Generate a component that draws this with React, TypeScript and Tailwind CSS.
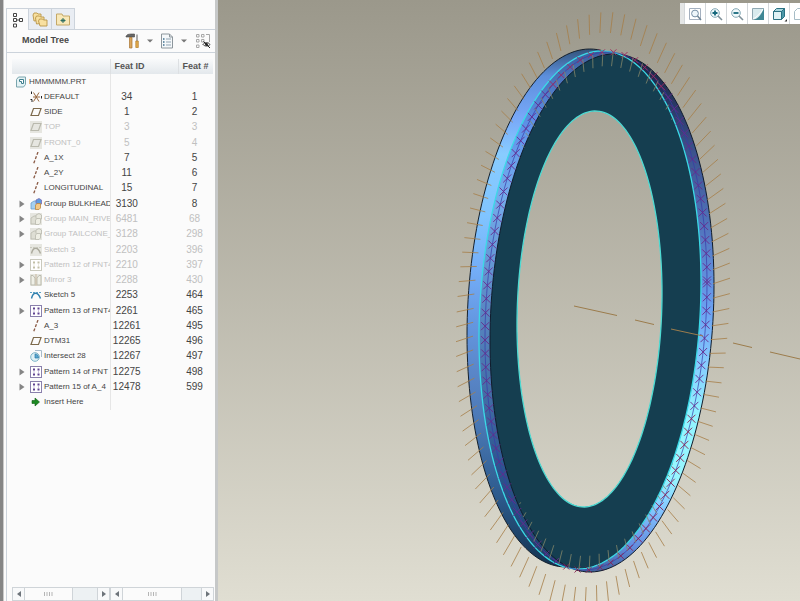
import React, { useState } from 'react';

type Kind = 'part' | 'csys' | 'plane' | 'axis' | 'group' | 'sketch' | 'pattern' | 'mirror' | 'intersect' | 'insert';

interface Feature {
  name: string;
  kind: Kind;
  id?: number;
  num?: number;
  off?: boolean;
  expandable?: boolean;
}

const features: Feature[] = [
  { name: 'HMMMMM.PRT', kind: 'part' },
  { name: 'DEFAULT', kind: 'csys', id: 34, num: 1 },
  { name: 'SIDE', kind: 'plane', id: 1, num: 2 },
  { name: 'TOP', kind: 'plane', id: 3, num: 3, off: true },
  { name: 'FRONT_0', kind: 'plane', id: 5, num: 4, off: true },
  { name: 'A_1X', kind: 'axis', id: 7, num: 5 },
  { name: 'A_2Y', kind: 'axis', id: 11, num: 6 },
  { name: 'LONGITUDINAL', kind: 'axis', id: 15, num: 7 },
  { name: 'Group BULKHEAD', kind: 'group', id: 3130, num: 8, expandable: true },
  { name: 'Group MAIN_RIVE', kind: 'group', id: 6481, num: 68, off: true, expandable: true },
  { name: 'Group TAILCONE_', kind: 'group', id: 3128, num: 298, off: true, expandable: true },
  { name: 'Sketch 3', kind: 'sketch', id: 2203, num: 396, off: true },
  { name: 'Pattern 12 of PNT4', kind: 'pattern', id: 2210, num: 397, off: true, expandable: true },
  { name: 'Mirror 3', kind: 'mirror', id: 2288, num: 430, off: true, expandable: true },
  { name: 'Sketch 5', kind: 'sketch', id: 2253, num: 464 },
  { name: 'Pattern 13 of PNT4', kind: 'pattern', id: 2261, num: 465, expandable: true },
  { name: 'A_3', kind: 'axis', id: 12261, num: 495 },
  { name: 'DTM31', kind: 'plane', id: 12265, num: 496 },
  { name: 'Intersect 28', kind: 'intersect', id: 12267, num: 497 },
  { name: 'Pattern 14 of PNT', kind: 'pattern', id: 12275, num: 498, expandable: true },
  { name: 'Pattern 15 of A_4', kind: 'pattern', id: 12478, num: 599, expandable: true },
  { name: 'Insert Here', kind: 'insert' },
];

// ---- Ring geometry ----
interface Oval { cx: number; cy: number; w: number; h: number; tilt: number }

const back: Oval = { cx: 578, cy: 308, w: 111, h: 259, tilt: 0.107 };
const rim: Oval = { cx: 590, cy: 310, w: 111, h: 259, tilt: 0.107 };
const front: Oval = { cx: 602, cy: 313, w: 112, h: 259, tilt: 0.107 };
const rivets: Oval = { cx: 596, cy: 311, w: 111, h: 259, tilt: 0.107 };
const hole: Oval = { cx: 589.5, cy: 309, w: 72.5, h: 198, tilt: 0.08 };
const tickEnds: Oval = { cx: 593, cy: 310, w: 137, h: 298, tilt: 0.107 };
const innerEnds: Oval = { cx: 596, cy: 311, w: 107, h: 245, tilt: 0.107 };

const at = (o: Oval, t: number) => ({
  x: o.cx + o.w * Math.cos(t),
  y: o.cy + o.h * Math.sin(t - o.tilt),
});

const ovalPath = (o: Oval) => {
  const pts: string[] = [];
  for (let i = 0; i < 180; i++) {
    const p = at(o, (i * Math.PI) / 90);
    pts.push(`${p.x.toFixed(2)} ${p.y.toFixed(2)}`);
  }
  return `M${pts.join('L')}Z`;
};

// Angles that are evenly spread along the curve, with x counted heavier than y
const spread = (o: Oval, step: number, weight: number) => {
  const out: number[] = [];
  let acc = step;
  let prev = at(o, 0);
  for (let t = 0; t < Math.PI * 2; t += 0.002) {
    const p = at(o, t);
    acc += Math.hypot((p.x - prev.x) * weight, p.y - prev.y);
    prev = p;
    if (acc >= step) {
      out.push(t);
      acc -= step;
    }
  }
  return out;
};

const crossAngles = spread(rivets, 13.7, 1.2);
const tickAngles = spread(tickEnds, 15, 1.25);

const P = {
  back: ovalPath(back),
  rim: ovalPath(rim),
  front: ovalPath(front),
  rivets: ovalPath(rivets),
  hole: ovalPath(hole),
};

const Stops = ({ list }: { list: [number, string][] }) => (
  <>
    {list.map(([o, c]) => <stop key={o} offset={o} stopColor={c} />)}
  </>
);

const RingModel = () => (
  <svg className="block h-full w-full" viewBox="218 0 582 601" preserveAspectRatio="xMinYMin slice" role="img" aria-label="Ring part">
    <defs>
      <linearGradient id="outer" gradientUnits="userSpaceOnUse" x1="0" x2="0" y1="50" y2="570">
        <Stops list={[[0, '#34567f'], [0.05, '#5c8fdc'], [0.13, '#78a8f8'], [0.2, '#88ccff'], [0.32, '#80c4ff'], [0.42, '#74aef8'], [0.52, '#6498e2'], [0.62, '#5a86c8'], [0.72, '#4a78b4'], [0.86, '#2c5a8c'], [1, '#12304c']]} />
      </linearGradient>
      <linearGradient id="inner" gradientUnits="userSpaceOnUse" x1="0" x2="0" y1="50" y2="570">
        <Stops list={[[0, '#3c5f9d'], [0.15, '#5f94ea'], [0.28, '#74acec'], [0.45, '#6090cc'], [0.65, '#4470a8'], [0.8, '#2d5690'], [1, '#1b3f63']]} />
      </linearGradient>
      <linearGradient id="right" gradientUnits="userSpaceOnUse" x1="0" x2="0" y1="50" y2="572">
        <Stops list={[[0, '#1a2840'], [0.06, '#202c52'], [0.2, '#3c548f'], [0.35, '#5377c0'], [0.5, '#6ba2f2'], [0.6, '#86ccff'], [0.7, '#92f4ff'], [0.82, '#98f6ff'], [0.88, '#84c6ff'], [0.95, '#648ee0'], [1, '#40609c']]} />
      </linearGradient>
      <clipPath id="face"><path d={P.front} /></clipPath>
    </defs>

    <path d={P.back + P.hole} fill="url(#outer)" fillRule="evenodd" />
    <path d={P.back} fill="none" stroke="#15202c" />
    <path d={P.front + P.hole} fill="url(#right)" fillRule="evenodd" />
    <path d={P.rim + P.hole} fill="url(#inner)" fillRule="evenodd" />
    <path d={P.rim + P.hole} fill="#153e50" fillRule="evenodd" clipPath="url(#face)" />
    <path d={P.front} fill="none" stroke="#101c2c" />
    <path d={P.rim} fill="none" stroke="#3bd9e6" strokeWidth="1.3" />
    <path d={P.hole} fill="none" stroke="#4edbd2" strokeWidth="1.3" />
    <path d={P.rivets} fill="none" stroke="#3a3aa8" strokeWidth="0.7" />

    {/* Point marks */}
    {crossAngles.map((t) => {
      const p = at(rivets, t);
      const low = p.y > 415 && p.x > 560;
      const k = Math.abs(p.y - 311) > 235 ? 3 : 4;
      return (
        <path
          key={t}
          d={`M${p.x - k} ${p.y - k}l${2 * k} ${2 * k}M${p.x + k} ${p.y - k}l${-2 * k} ${2 * k}`}
          stroke={low ? '#8a1f50' : p.y < 90 ? '#a0285e' : '#68288c'}
          strokeWidth="0.9"
        />
      );
    })}

    {/* Rivet axes */}
    {tickAngles.map((t) => {
      const p = at(tickEnds, t);
      const dx = 17 * Math.cos(t);
      const dy = 21 * Math.sin(t - 0.27);
      const q = at(innerEnds, t);
      const k = Math.min(1, Math.max(0, Math.abs(Math.sin(t)) - 0.68) / 0.2) * 0.65;
      return (
        <g key={t} strokeWidth="0.8">
          <path d={`M${p.x} ${p.y}L${p.x - dx} ${p.y - dy}`} stroke="#a67d48" />
          {k > 0 && <path d={`M${q.x} ${q.y}l${dx * k} ${dy * k}`} stroke="#83866a" />}
        </g>
      );
    })}

    <path d="M574 306L617 315.500M635 320L654 324.500M671 329L703 336M733 343L752 347.500M770 352L800 359" stroke="#9c7c4c" strokeWidth="1" />
  </svg>
);

const FeatureIcon = ({ kind, off }: { kind: Kind; off?: boolean }) => {
  const line = off ? '#b9b9ad' : '#7d6a4c';
  return (
    <svg className="h-3 w-3 shrink-0" viewBox="0 0 12 12" fill="none" aria-hidden="true">
      {off && <rect width="12" height="12" fill="#e6e6e0" />}
      {kind === 'part' && (
        <>
          <path d="M1.500 3.500L3.500 1H10.500V8.500L8.500 11H1.500Z" fill="#e4f2f4" stroke="#7aa5ae" />
          <path d="M4.500 3.500H8.500V7.500H6.500V5.500H4.500Z" fill="#fff" stroke="#3d7f8e" />
        </>
      )}
      {kind === 'csys' && (
        <>
          <path d="M3.500 1.500L9 10.500M9 1.500L3.500 10.500M3 6H10" stroke="#96663e" />
          <path d="M1.500 0.500V3M0.500 8.500H2V11M11.500 5V7.500" stroke="#222" />
        </>
      )}
      {kind === 'plane' && <path d="M3.500 2.500H11L8.500 9.500H1Z" stroke={line} strokeWidth="1.200" />}
      {kind === 'axis' && <path d="M8 0L3.500 12" stroke="#8a5a44" strokeWidth="1.300" strokeDasharray="3 1.500" />}
      {kind === 'group' && (
        <>
          <path d="M1 5L4 3H8V9L6 11H1Z" fill={off ? '#deded4' : '#a4d0f0'} stroke={off ? '#b9b9ad' : '#6aa0cc'} strokeWidth="0.800" />
          <path d="M6 2L9 0.500L11.500 2V6L9 7L6 5.500Z" fill={off ? '#e8e8de' : '#5d9be0'} stroke={off ? '#b9b9ad' : '#7c6db0'} strokeWidth="0.800" />
          <path d="M5.500 7L7 5.500H10.500V10L9 11.500H5.500Z" fill={off ? '#eeeee4' : '#f2c886'} stroke={off ? '#b9b9ad' : '#b98740'} strokeWidth="0.800" />
        </>
      )}
      {kind === 'sketch' && (
        <>
          <path d="M1.500 9.500C3 2.500 8 2.500 10.500 9.500" stroke={off ? '#aaa99c' : '#2f7fae'} strokeWidth="1.400" />
          <path d="M0 3.500H12" stroke={off ? '#c8c8bc' : '#5aa0c4'} strokeDasharray="2 1" />
        </>
      )}
      {kind === 'pattern' && (
        <>
          <rect x="0.500" y="0.500" width="11" height="11" fill="#fff" stroke={off ? '#c9c9bd' : '#8a80ac'} />
          <path d="M3 3.500H5M7.500 3.500H9.500M3 8.500H5M7.500 8.500H9.500" stroke={off ? '#c2bfa6' : '#5f4290'} strokeWidth="1.800" />
          <path d="M3.500 6H4.500M8 6H9" stroke={off ? '#d5d2be' : '#9a86bc'} />
        </>
      )}
      {kind === 'mirror' && (
        <>
          <path d="M1 1.500H3L5 4V11H1ZM11 1.500H9L7 4V11H11Z" fill="#efefe6" stroke="#bbbbae" />
          <path d="M6 0V12" stroke="#c9b9a0" />
        </>
      )}
      {kind === 'intersect' && (
        <>
          <path d="M5 0.500H11.500V7" stroke="#a8bccb" />
          <circle cx="5" cy="7" r="4.300" fill="#dff1f6" stroke="#7db4c8" />
          <path d="M5 4V8H8.500C8.500 5.500 7.500 4 5 4Z" fill="#58a5d0" stroke="#2d7ca6" strokeWidth="0.700" />
        </>
      )}
      {kind === 'insert' && <path d="M2 4.500H5V2L9.500 6L5 10V7.500H2Z" fill="#1d8a22" stroke="#0f5a14" strokeWidth="0.600" />}
    </svg>
  );
};

const TreeIcon = () => (
  <svg className="h-4 w-4" viewBox="0 0 16 16" fill="none" stroke="#444" aria-hidden="true">
    <path d="M3.500 1.500H6.500V4.500H3.500ZM3.500 6.500H6.500V9.500H3.500ZM3.500 12H6.500V15H3.500ZM9.500 6.500H12.500V9.500H9.500ZM7 8H9" />
  </svg>
);

const FoldersIcon = () => (
  <svg className="h-4 w-4" viewBox="0 0 16 16" fill="#f8e0a0" stroke="#b99548" strokeWidth="0.900" aria-hidden="true">
    <path d="M1 4L2 2H5L6 3H9V9L2 10Z" />
    <path d="M3.500 7L4.500 5H7.500L8.500 6H12V12L4.500 13Z" />
    <path d="M6.500 10L7.500 8H10.500L11.500 9H15V15H8Z" />
  </svg>
);

const FavoriteIcon = () => (
  <svg className="h-4 w-4" viewBox="0 0 16 16" aria-hidden="true">
    <path d="M1.500 3H7L8 5H14.500V14H1.500Z" fill="#f8e8b8" stroke="#c4a868" />
    <path d="M8 7V12M5.500 9.500H10.500M6.500 8L9.500 11M9.500 8L6.500 11" stroke="#2e6f62" />
  </svg>
);

const Tools = () => (
  <svg className="h-4 w-4" viewBox="0 0 16 16" aria-hidden="true">
    <path d="M1 3.500C2 1 4 1 9.500 1V4H1Z" fill="#686868" stroke="#444" strokeWidth="0.600" />
    <path d="M4.500 4.500H7V15H4.500Z" fill="#dca75b" stroke="#a87430" strokeWidth="0.700" />
    <path d="M12 1.500V8" stroke="#8a8a8a" strokeWidth="1.400" />
    <path d="M10.800 8H13.300V14.500H10.800Z" fill="#e4ac4c" stroke="#b27b2a" strokeWidth="0.700" />
  </svg>
);

const ListIcon = () => (
  <svg className="h-4 w-4" viewBox="0 0 16 16" fill="none" aria-hidden="true">
    <path d="M2.500 1H10.500L13.500 4V15H2.500Z" fill="#f5f8fa" stroke="#8d969c" />
    <path d="M10.500 1V4H13.500" stroke="#8d969c" />
    <path d="M7 6H12M7 9H12M7 12H12" stroke="#8fa3b2" />
    <path d="M4 6H5.500M4 9H5.500M4 12H5.500" stroke="#3f6f8f" strokeWidth="1.500" />
  </svg>
);

const HiddenTreeIcon = () => (
  <svg className="h-4 w-4" viewBox="0 0 16 16" fill="none" aria-hidden="true">
    <path d="M1.500 1.500H4V4H1.500ZM1.500 6.500H4V9H1.500ZM1.500 12H4V14.500H1.500ZM6.500 6.500H9V9H6.500ZM6.500 1.500H9V4H6.500ZM11 1.500H14.500V9" stroke="#a8a8a8" />
    <path d="M8 11.500C9.500 9 13.500 9 15 11.500C13.500 13.500 9.500 13.500 8 11.500Z" stroke="#333" />
    <circle cx="11.500" cy="11.500" r="1.400" fill="#222" />
    <path d="M8.500 8.500L15 15" stroke="#222" />
  </svg>
);

const Caret = () => (
  <svg className="h-1 w-1.5" viewBox="0 0 6 4" aria-hidden="true"><path d="M0 0.500H6L3 3.500Z" fill="#777" /></svg>
);

const viewTools: { label: string; icon: React.ReactNode }[] = [
  {
    label: 'Refit',
    icon: (
      <>
        <path d="M0.500 0.500H11.500V11.500H0.500Z" stroke="#a4b0bf" />
        <circle cx="6" cy="5.500" r="3.400" fill="#eef6fa" stroke="#7790a5" />
        <path d="M8.500 8L12 12" stroke="#6e8494" strokeWidth="1.500" />
      </>
    ),
  },
  {
    label: 'Zoom In',
    icon: (
      <>
        <circle cx="5" cy="5" r="4.300" fill="#f1f9fb" stroke="#84a9b6" />
        <path d="M2.500 5H7.500M5 2.500V7.500" stroke="#16687c" strokeWidth="1.800" />
        <path d="M8 8L12 12" stroke="#7d8f98" strokeWidth="1.600" />
      </>
    ),
  },
  {
    label: 'Zoom Out',
    icon: (
      <>
        <circle cx="5" cy="5" r="4.300" fill="#f1f9fb" stroke="#84a9b6" />
        <path d="M2.500 5H7.500" stroke="#16687c" strokeWidth="1.800" />
        <path d="M8 8L12 12" stroke="#7d8f98" strokeWidth="1.600" />
      </>
    ),
  },
  {
    label: 'Repaint',
    icon: (
      <>
        <path d="M0.500 0.500H11.500V11.500H0.500Z" fill="#d9ebee" stroke="#8fa8b2" />
        <path d="M12 0V12H2C7 10 10 5 12 0Z" fill="#3f8794" />
        <path d="M1 11C5 9 9 5 11 1" stroke="#fff" />
      </>
    ),
  },
  {
    label: 'Display Style',
    icon: (
      <>
        <path d="M0.500 3.500H8.500V11.500H0.500Z" fill="#dff2f5" stroke="#2b7182" />
        <path d="M0.500 3.500L3.500 0.500H11.500L8.500 3.500Z" fill="#a9d6de" stroke="#2b7182" />
        <path d="M8.500 3.500L11.500 0.500V8.500L8.500 11.500Z" fill="#4d98a8" stroke="#2b7182" />
        <path d="M14 11V13.500H11.500Z" fill="#333" />
      </>
    ),
  },
  { label: 'Saved Views', icon: <path d="M0.500 3.500L3.500 0.500H11.500V8.500L8.500 11.500H0.500Z" stroke="#a6bcc6" /> },
];

const ScrollBar = ({ className, thumb }: { className: string; thumb: string }) => (
  <div className={`flex h-[14px] border border-[#cfd4d8] bg-[#edf1f3] ${className}`}>
    <button aria-label="Scroll left" className="flex w-3 items-center justify-center border-r border-[#cfd4d8] bg-[#f8f9fa]">
      <svg className="h-1.5 w-1" viewBox="0 0 4 6"><path d="M4 0V6L0 3Z" fill="#6d747a" /></svg>
    </button>
    <div className={`flex items-center justify-center border-r border-[#cfd4d8] bg-[#fbfbfb] ${thumb}`}>
      <svg className="h-1.5 w-[9px]" viewBox="0 0 9 6"><path d="M0.500 1V5M3 1V5M5.500 1V5M8 1V5" stroke="#b5b5b5" /></svg>
    </div>
    <div className="flex-1" />
    <button aria-label="Scroll right" className="flex w-3 items-center justify-center border-l border-[#cfd4d8] bg-[#f8f9fa]">
      <svg className="h-1.5 w-1" viewBox="0 0 4 6"><path d="M0 0V6L4 3Z" fill="#6d747a" /></svg>
    </button>
  </div>
);

const tabs = [
  { label: 'Model Tree', icon: <TreeIcon /> },
  { label: 'Folder Browser', icon: <FoldersIcon /> },
  { label: 'Favorites', icon: <FavoriteIcon /> },
];

const ModelTree = () => {
  const [tab, setTab] = useState(0);

  return (
    <aside className="flex w-[218px] shrink-0 border-r-3 border-[#c6c8c8] bg-[#fbfbfb]">
      <div className="w-1 shrink-0 border-r border-[#c9c9c9] bg-[#858585]" />
      <div className="ml-0.5 flex min-w-0 flex-1 flex-col">
        <div className="mt-2 flex h-[22px]">
          {tabs.map((t, i) => (
            <button
              key={t.label}
              aria-label={t.label}
              onClick={() => setTab(i)}
              className={`flex w-[23px] items-center justify-center border-t border-r border-[#ccd3db] ${i === tab ? 'border-l bg-[#fbfbfb]' : 'border-b bg-[#e9edf3]'}`}
            >
              {t.icon}
            </button>
          ))}
          <div className="flex-1 border-b border-[#ccd3db]" />
        </div>

        <div className="flex min-h-0 flex-1 flex-col border-l border-[#ccd3db]">
          <div className="flex h-[23px] items-center border-b border-[#ccd3db] pl-[15px]">
            <h2 className="flex-1 text-[9px] font-bold text-[#484848]">Model Tree</h2>
            <button aria-label="Settings" className="flex items-center gap-1.5"><Tools /><Caret /></button>
            <button aria-label="Show" className="ml-1.5 flex items-center gap-1.5"><ListIcon /><Caret /></button>
            <button aria-label="Hidden items" className="mr-1 ml-2"><HiddenTreeIcon /></button>
          </div>

          <div className="mt-1.5 mr-0.5 ml-[5px] min-h-0 flex-1 overflow-hidden">
            <table className="h-[351px] w-full table-fixed border-collapse text-left">
              <thead>
                <tr className="h-[15px] bg-linear-to-b from-[#f9fafb] to-[#e3e8ec] text-[9px] text-[#555]">
                  <th aria-label="Name" className="w-[98px] border-r border-[#dde0e3] p-0" />
                  <th className="border-r border-[#dde0e3] p-0 pl-1 font-bold">Feat ID</th>
                  <th className="w-[35px] p-0 pl-1 font-bold whitespace-nowrap">Feat #</th>
                </tr>
              </thead>
              <tbody>
                {features.map((f) => (
                  <tr key={f.name} className={f.off ? 'text-[#c0c0c0]' : 'text-[#444]'}>
                    <td className="overflow-hidden border-r border-[#e6e6e6] p-0">
                      <div className={`flex items-center gap-0.5 whitespace-nowrap text-[8px] leading-3 ${f.kind === 'part' ? 'pl-[3px]' : 'pl-[7px]'}`}>
                        {f.kind !== 'part' && (
                          <span className="w-[9px] shrink-0">
                            {f.expandable && (
                              <button aria-label={`Expand ${f.name}`} className="block">
                                <svg className="h-2 w-1.5" viewBox="0 0 6 8"><path d="M0.500 0.500V7.500L5.500 4Z" fill="#858585" /></svg>
                              </button>
                            )}
                          </span>
                        )}
                        <FeatureIcon kind={f.kind} off={f.off} />
                        <span>{f.name}</span>
                      </div>
                    </td>
                    <td className="p-0 pr-[35px] text-center text-[10px] leading-3">{f.id}</td>
                    <td className="p-0 pr-0.5 text-center text-[10px] leading-3">{f.num}</td>
                  </tr>
                ))}
              </tbody>
            </table>
          </div>

          <div className="ml-[5px] flex pr-px">
            <ScrollBar className="w-[98px]" thumb="w-[48px]" />
            <ScrollBar className="flex-1" thumb="w-[59px]" />
          </div>
        </div>
      </div>
    </aside>
  );
};

export default function App() {
  return (
    <div className="flex h-screen overflow-hidden font-['Liberation_Sans',Arial,sans-serif]">
      <ModelTree />
      <main className="relative min-w-0 flex-1 overflow-hidden bg-linear-to-b from-[#9b988b] to-[#e0ded2]">
        <RingModel />
        <div role="toolbar" aria-label="View" className="absolute top-[3px] -right-2.5 flex h-[21px] border-l-4 border-[#e4e6e6] bg-white">
          {viewTools.map((v) => (
            <button key={v.label} aria-label={v.label} className="flex w-[21px] items-center justify-center border-l border-[#d3d7da]">
              <svg className="h-3 w-3 overflow-visible" viewBox="0 0 12 12" fill="none" aria-hidden="true">{v.icon}</svg>
            </button>
          ))}
        </div>
      </main>
    </div>
  );
}
